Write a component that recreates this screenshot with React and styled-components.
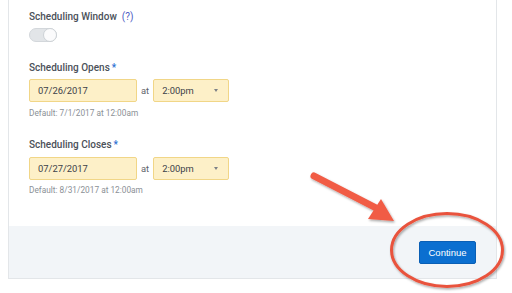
import React from 'react';
import styled, { createGlobalStyle } from 'styled-components';

const GlobalStyle = createGlobalStyle`
  html, body {
    margin: 0;
    padding: 0;
    background: #ffffff;
    font-family: Roboto, "Liberation Sans", Arial, sans-serif;
    overflow: hidden;
  }
`;

const Page = styled.div`
  position: relative;
  width: 512px;
  height: 293px;
  padding-left: 8px;
  box-sizing: border-box;
`;

const Card = styled.div`
  width: 489px;
  box-sizing: border-box;
  border: 1px solid #e3e6e9;
  border-top: none;
  background: #fff;
`;

const Body = styled.div`
  padding: 11px 20px 31px 20px;
`;

const Label = styled.div`
  font-size: 10px;
  line-height: 12px;
  font-weight: 500;
  color: #4b5159;
  margin-top: ${({ gap }) => gap || 0}px;
`;

const Help = styled.span`
  color: #4d5cc4;
  font-weight: 400;
  margin-left: 5px;
`;

const Star = styled.span`
  color: #2b6fd2;
  margin-left: 2px;
`;

const Toggle = styled.div`
  margin-top: 5px;
  width: 28px;
  height: 14px;
  border-radius: 7px;
  background: #e2e5e8;
  border: 1px solid #d3d7db;
  box-sizing: border-box;
  position: relative;

  &::after {
    content: '';
    position: absolute;
    right: -1px;
    top: -1px;
    width: 14px;
    height: 14px;
    border-radius: 50%;
    background: #fbfbfc;
    border: 1px solid #cdd2d6;
    box-sizing: border-box;
  }
`;

const Row = styled.div`
  display: flex;
  align-items: center;
  margin-top: ${({ gap }) => gap}px;
`;

const Field = styled.div`
  box-sizing: border-box;
  width: ${({ w }) => w}px;
  height: 23px;
  background: #fdf0c8;
  border: 1px solid #f1d687;
  border-radius: 2px;
  padding: 0 8px;
  display: flex;
  align-items: center;
  justify-content: space-between;
  font-size: 9.4px;
  color: #3c4148;
`;

const Caret = styled.span`
  width: 0;
  height: 0;
  border-left: 2.5px solid transparent;
  border-right: 2.5px solid transparent;
  border-top: 3px solid #7d8187;
  margin-right: 2px;
`;

const At = styled.span`
  font-size: 9.4px;
  color: #5f646b;
  margin: 0 4px;
`;

const Hint = styled.div`
  font-size: 8.3px;
  line-height: 10px;
  color: #8b9096;
  margin-top: ${({ gap }) => gap}px;
`;

const Footer = styled.div`
  height: 52px;
  background: #f2f5f8;
  display: flex;
  align-items: center;
  justify-content: flex-end;
  padding-right: 20px;
`;

const Button = styled.button`
  height: 23px;
  width: 57px;
  background: #0b6fd0;
  border: 1px solid #0a5fb5;
  border-radius: 2px;
  color: #fff;
  font-family: "Liberation Sans", Arial, sans-serif;
  font-size: 9.5px;
  padding: 0;
  margin-top: 1px;
`;

const Annotation = styled.svg`
  position: absolute;
  left: 0;
  top: 0;
  pointer-events: none;
`;

const DateRow = ({ gap, date }) => (
  <Row gap={gap}>
    <Field w={108}>{date}</Field>
    <At>at</At>
    <Field w={76}>
      2:00pm
      <Caret />
    </Field>
  </Row>
);

export default function App() {
  return (
    <Page>
      <GlobalStyle />
      <Card>
        <Body>
          <Label>
            Scheduling Window<Help>(?)</Help>
          </Label>
          <Toggle />

          <Label gap={20}>
            Scheduling Opens<Star>*</Star>
          </Label>
          <DateRow gap={5} date="07/26/2017" />
          <Hint gap={6}>Default: 7/1/2017 at 12:00am</Hint>

          <Label gap={21}>
            Scheduling Closes<Star>*</Star>
          </Label>
          <DateRow gap={6} date="07/27/2017" />
          <Hint gap={5}>Default: 8/31/2017 at 12:00am</Hint>
        </Body>
        <Footer>
          <Button>Continue</Button>
        </Footer>
      </Card>

      <Annotation width="512" height="293" viewBox="0 0 512 293">
        <defs>
          <filter id="shadow" x="-20%" y="-20%" width="140%" height="140%">
            <feDropShadow dx="1" dy="1.5" stdDeviation="1" floodColor="#000" floodOpacity="0.35" />
          </filter>
        </defs>
        <g filter="url(#shadow)">
          <line x1="314" y1="176" x2="382" y2="211" stroke="#f15b45" strokeWidth="7" strokeLinecap="round" />
          <polygon points="381,199 394,221 368,219" fill="#f15b45" />
        </g>
        <ellipse
          cx="447"
          cy="250"
          rx="55.5"
          ry="36.5"
          fill="none"
          stroke="#e9533d"
          strokeWidth="3"
          filter="url(#shadow)"
        />
      </Annotation>
    </Page>
  );
}
